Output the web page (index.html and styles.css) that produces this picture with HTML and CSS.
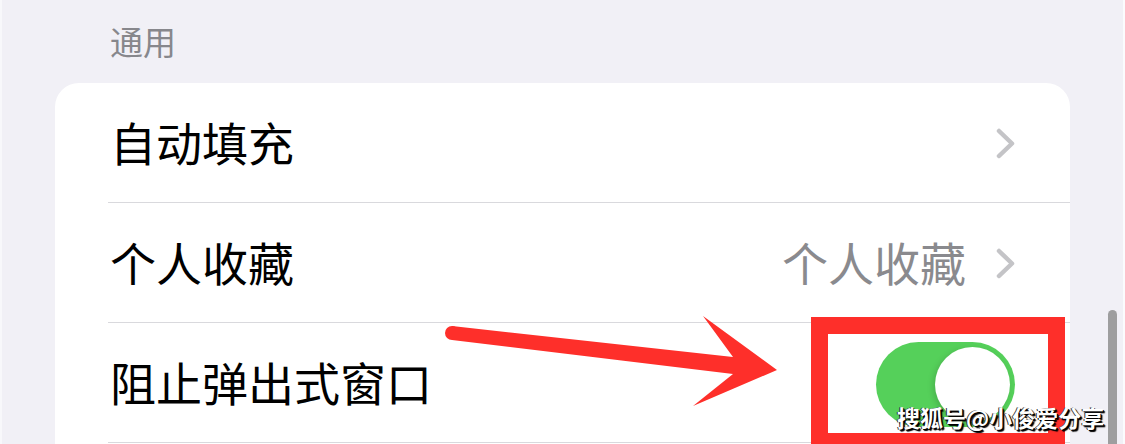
FILE: index.html
```html
<!DOCTYPE html>
<html lang="zh-CN">
<head>
    <meta charset="UTF-8">
    <meta name="viewport" content="width=device-width, initial-scale=1.0">
    <title>通用设置</title>
    <link rel="stylesheet" href="styles.css">
</head>
<body>
<div class="page">
    <div class="settings">
        <div class="group-title">通用</div>
        <div class="card">
            <div class="row">
                <span class="label">自动填充</span>
                <span class="accessory">
                    <svg class="chevron" viewBox="0 0 19 31"><polyline points="3,3 16,15.5 3,28"/></svg>
                </span>
            </div>
            <div class="row">
                <span class="label">个人收藏</span>
                <span class="accessory">
                    <span class="value">个人收藏</span>
                    <svg class="chevron" viewBox="0 0 19 31"><polyline points="3,3 16,15.5 3,28"/></svg>
                </span>
            </div>
            <div class="row">
                <span class="label">阻止弹出式窗口</span>
                <span class="accessory">
                    <span class="switch"><span class="knob"></span></span>
                </span>
            </div>
        </div>
    </div>
    <div class="scroll-track">
        <div class="scroll-thumb"></div>
    </div>
</div>

<!-- annotation layer -->
<svg class="arrow" viewBox="0 0 1125 444">
    <circle cx="452" cy="333" r="7"/>
    <polygon points="452,326 733,357 703,316 777,370 693,406 733,374 452,340"/>
</svg>
<div class="highlight"></div>
<div class="watermark">搜狐号@小俊爱分享</div>
</body>
</html>
```

FILE: styles.css
```css
body {
    margin: 0;
    padding: 0;
    width: 1125px;
    height: 444px;
    overflow: hidden;
    background-color: #f1f0f6;
    font-family: "Noto Sans CJK SC", sans-serif;
    position: relative;
}
.page {
    display: flex;
    height: 444px;
    border-left: 2px solid #f8f8fb;
    box-sizing: border-box;
}
.settings {
    width: 1015px;
    margin-left: 53px;
}
.group-title {
    height: 83px;
    padding-left: 55px;
    box-sizing: border-box;
    font-size: 33px;
    line-height: 33px;
    padding-top: 25px;
    color: #87878c;
}
.card {
    background-color: #ffffff;
    border-radius: 24px 24px 0 0;
    height: 361px;
}
.row {
    height: 119px;
    margin-left: 53px;
    padding-right: 55px;
    border-bottom: 1px solid #d9d9dd;
    display: flex;
    align-items: center;
    justify-content: space-between;
}
.label {
    font-size: 46px;
    line-height: 46px;
    color: #000000;
    padding-left: 2px;
    margin-top: -4px;
}
.accessory {
    display: flex;
    align-items: center;
}
.value {
    font-size: 46px;
    line-height: 46px;
    color: #8a8a8e;
    margin-right: 30px;
    margin-top: -4px;
}
.chevron {
    width: 19px;
    height: 31px;
    margin-top: 2px;
}
.chevron polyline {
    fill: none;
    stroke: #c4c4c7;
    stroke-width: 4.5;
    stroke-linecap: round;
    stroke-linejoin: round;
}
.switch {
    width: 139px;
    height: 85px;
    border-radius: 43px;
    background-color: #55d05a;
    display: flex;
    align-items: center;
    justify-content: flex-end;
    padding: 0 5px;
    box-sizing: border-box;
    margin-top: 3px;
}
.knob {
    width: 75px;
    height: 75px;
    border-radius: 50%;
    background-color: #ffffff;
    box-shadow: -2px 2px 6px rgba(0, 0, 0, 0.15);
}
.scroll-track {
    flex: 1;
    display: flex;
    justify-content: flex-end;
    padding-right: 6px;
    border-right: 2px solid #fbfbfd;
}
.scroll-thumb {
    width: 9px;
    height: 134px;
    margin-top: 310px;
    border-radius: 5px 5px 0 0;
    background-color: #9e9e9f;
}
.arrow {
    position: absolute;
    left: 0;
    top: 0;
    width: 1125px;
    height: 444px;
    fill: #fe2f2a;
}
.highlight {
    position: absolute;
    left: 811px;
    top: 317px;
    width: 254px;
    height: 127px;
    border: 17px solid #fe2f2a;
    border-bottom-width: 11px;
    box-sizing: border-box;
}
.watermark {
    position: absolute;
    left: 897px;
    top: 401px;
    font-size: 23px;
    line-height: 32px;
    font-weight: bold;
    color: #ffffff;
    text-shadow: 1px 1px 0 #000, 2px 2px 1px #000, -1px 0 0 #333;
}
```
